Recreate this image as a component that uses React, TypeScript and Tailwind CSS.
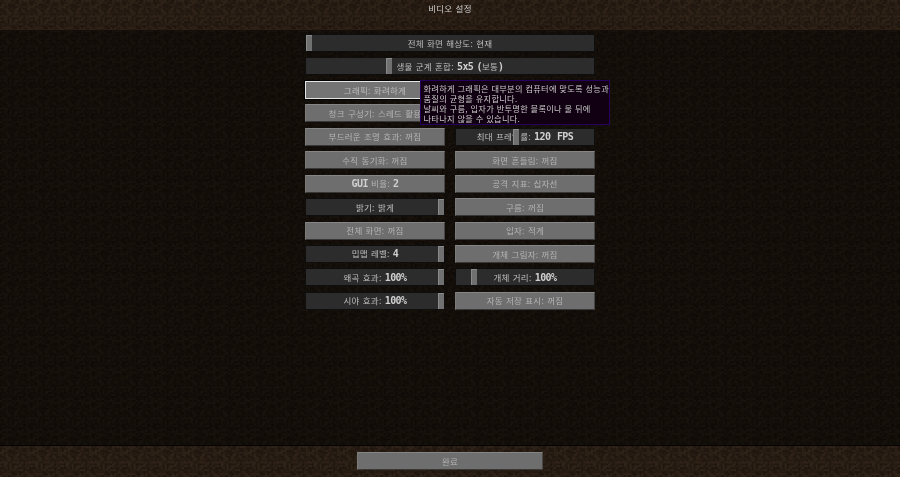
import { useId, type ReactNode } from 'react';

const KR = "font-['Noto_Sans_CJK_KR','Noto_Sans',sans-serif]";

// small seeded noise so the dirt tile looks the same on every render
function dirtCells() {
    const cells: { x: number; y: number; o: number; warm: boolean }[] = [];
    let seed = 7;
    const next = () => {
        seed = (seed * 16807) % 2147483647;
        return seed / 2147483647;
    };
    for (let y = 0; y < 16; y++) {
        for (let x = 0; x < 16; x++) {
            cells.push({ x, y, o: next(), warm: next() > 0.5 });
        }
    }
    return cells;
}
const CELLS = dirtCells();

function Dirt({ base, light, dark }: { base: string; light: string; dark: string }) {
    const id = useId();
    return (
        <svg className="absolute inset-0 w-full h-full blur-[0.4px]" aria-hidden="true">
            <defs>
                <pattern id={id} width="31" height="31" patternUnits="userSpaceOnUse">
                    <rect width="31" height="31" fill={base} />
                    {CELLS.map((c, i) => (
                        <rect
                            key={i}
                            x={c.x * 1.9375}
                            y={c.y * 1.9375}
                            width="1.95"
                            height="1.95"
                            fill={c.warm ? light : dark}
                            opacity={c.o * 0.8}
                        />
                    ))}
                </pattern>
            </defs>
            <rect width="100%" height="100%" fill={`url(#${id})`} />
        </svg>
    );
}

function Label({ children }: { children: ReactNode }) {
    return <span className="relative text-[8.5px] tracking-[0.25px] [word-spacing:1px] whitespace-pre blur-[0.25px]">{children}</span>;
}

// the Latin/number part of the labels renders bigger in the game font
function Num({ children }: { children: ReactNode }) {
    return <span className="font-['DejaVu_Sans_Mono'] font-bold text-[10px] tracking-[-0.55px] text-[#d0d0d0]">{children}</span>;
}

function Button({ children, selected = false, wide = false }: { children: ReactNode; selected?: boolean; wide?: boolean }) {
    return (
        <div
            className={`flex items-center justify-center h-[18px] ${wide ? 'w-[186px]' : ''} ${
                selected
                    ? 'bg-[#747474] text-[#bcbcbc] border-[1.5px] border-[#e4e4e4] shadow-[0_0_0_1px_#000]'
                    : 'bg-[#6e6e6e] text-[#b4b4b4] border border-[#1a1a1a] border-t-[#858585] border-l-[#7a7a7a] border-b-[#383838] border-r-[#474747]'
            }`}
        >
            <Label>{children}</Label>
        </div>
    );
}

function Slider({ children, pos }: { children: ReactNode; pos: number }) {
    return (
        <div className="relative flex items-center justify-center h-[18px] bg-[#2c2c2c] text-[#bfbfbf] border border-[#0e0e0e]">
            <Label>{children}</Label>
            <div
                className="absolute top-0 bottom-0 w-[6px] bg-[#707070] border-t border-l border-[#8a8a8a] border-b-[#3c3c3c]"
                style={{ left: `calc((100% - 6px) * ${pos})` }}
            />
        </div>
    );
}

export default function App() {
    return (
        <div className={`flex flex-col w-[900px] h-[477px] overflow-hidden bg-black ${KR}`}>
            <header className="relative h-[30px] shrink-0 flex justify-center pt-[2px] shadow-[0_1px_0_#050403]">
                <Dirt base="#261b12" light="#34261a" dark="#1a120b" />
                <span className="relative text-[8.5px] tracking-[0.25px] [word-spacing:1px] text-[#cfcfcf] blur-[0.25px]">비디오 설정</span>
            </header>

            <main className="relative flex-1 flex flex-col items-center pt-[4px]">
                <Dirt base="#120d08" light="#19130c" dark="#0c0805" />
                <div className="relative grid grid-cols-[140px_140px] gap-x-[10px] gap-y-[5.45px] w-[290px]">
                    <div className="col-span-2">
                        <Slider pos={0}>전체 화면 해상도: 현재</Slider>
                    </div>
                    <div className="col-span-2">
                        <Slider pos={0.285}>
                            생물 군계 혼합: <Num>5x5</Num> <Num>(</Num>보통<Num>)</Num>
                        </Slider>
                    </div>

                    <Button selected>그래픽: 화려하게</Button>
                    <div />
                    <Button>청크 구성기: 스레드 활용</Button>
                    <div />

                    <Button>부드러운 조명 효과: 꺼짐</Button>
                    <Slider pos={0.43}>
                        최대 프레임률: <Num>120 FPS</Num>
                    </Slider>
                    <Button>수직 동기화: 꺼짐</Button>
                    <Button>화면 흔들림: 꺼짐</Button>
                    <Button>
                        <Num>GUI</Num> 비율: <Num>2</Num>
                    </Button>
                    <Button>공격 지표: 십자선</Button>
                    <Slider pos={1}>밝기: 밝게</Slider>
                    <Button>구름: 꺼짐</Button>
                    <Button>전체 화면: 꺼짐</Button>
                    <Button>입자: 적게</Button>
                    <Slider pos={1}>
                        밉맵 레벨: <Num>4</Num>
                    </Slider>
                    <Button>개체 그림자: 꺼짐</Button>
                    <Slider pos={1}>
                        왜곡 효과: <Num>100%</Num>
                    </Slider>
                    <Slider pos={0.11}>
                        개체 거리: <Num>100%</Num>
                    </Slider>
                    <Slider pos={1}>
                        시야 효과: <Num>100%</Num>
                    </Slider>
                    <Button>자동 저장 표시: 꺼짐</Button>
                </div>

                {/* tooltip over the graphics button */}
                <div className="absolute left-[420px] top-[50px] w-[190px] h-[45px] bg-[#110011] border border-[#28005f] text-[#cccccc] text-[8.2px] leading-[10px] tracking-[0.3px] [word-spacing:0.5px] pl-[2.5px] pt-[1.5px] whitespace-nowrap">
                    <p className="blur-[0.2px]">화려하게 그래픽은 대부분의 컴퓨터에 맞도록 성능과</p>
                    <p className="blur-[0.2px]">품질의 균형을 유지합니다.</p>
                    <p className="blur-[0.2px]">날씨와 구름, 입자가 반투명한 블록이나 물 뒤에</p>
                    <p className="blur-[0.2px]">나타나지 않을 수 있습니다.</p>
                </div>
            </main>

            <footer className="relative h-[31px] shrink-0 flex justify-center pt-[6px] shadow-[0_-1px_0_#050403]">
                <Dirt base="#261b12" light="#34261a" dark="#1a120b" />
                <div className="relative">
                    <Button wide>완료</Button>
                </div>
            </footer>
        </div>
    );
}
